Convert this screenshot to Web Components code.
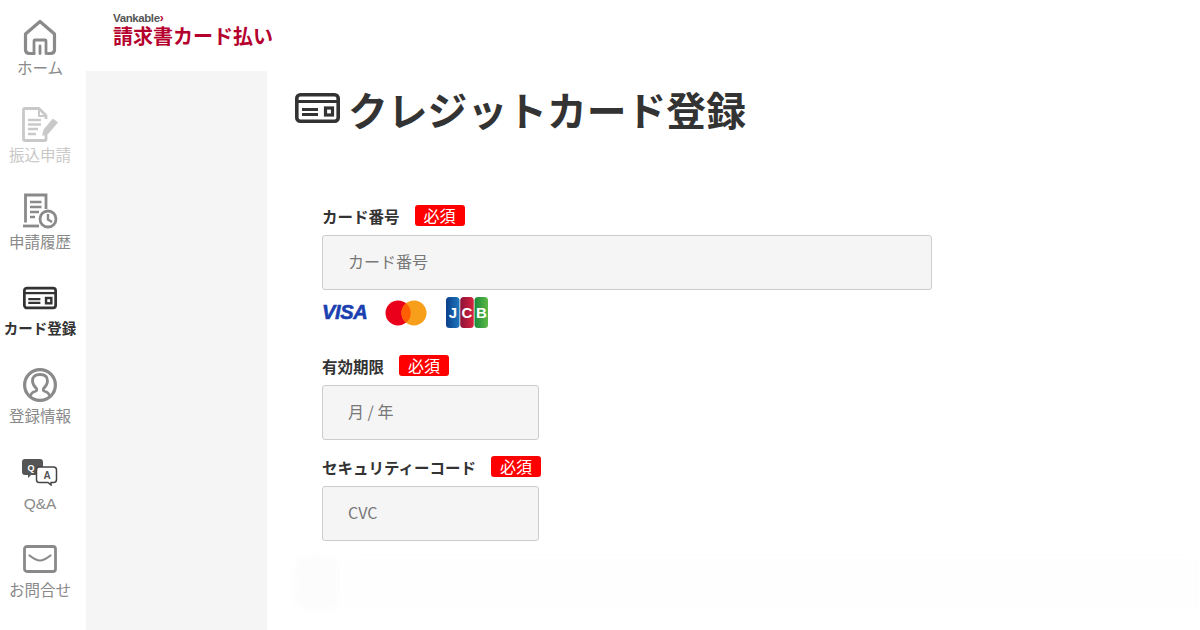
<!DOCTYPE html>
<html lang="ja">
<head>
<meta charset="utf-8">
<title>クレジットカード登録</title>
<style>
    html, body { margin: 0; height: 100%; background: #fff; overflow: hidden; }
    body { font-family: "Noto Sans CJK JP", "Noto Sans", sans-serif; color: #333; }
    svg { display: block; }
</style>
</head>
<body>
<app-shell>
    <side-nav slot="nav">
        <nav-item>
            <svg slot="icon" width="34" height="37" viewBox="0 0 34 37" fill="none" stroke="#8a8a8a" stroke-width="3.200" stroke-linejoin="round" stroke-linecap="round"><path d="M11 34.500H6.500Q2.500 34.500 2.500 30.500V15L17 2.500L31.500 15V30.500Q31.500 34.500 27.500 34.500H25"/><path d="M11 34.500V22Q11 21 12 21H22Q23 21 23 22V34.500M17 34.500V27" stroke-width="2.800"/></svg>
            ホーム
        </nav-item>
        <nav-item dim>
            <svg slot="icon" width="36" height="35" viewBox="0 0 36 35" fill="none" stroke="#c9c9c9" stroke-width="2.800" stroke-linejoin="round"><path d="M24 27V32.500Q24 33.500 23 33.500H3Q1.500 33.500 1.500 32V3Q1.500 1.500 3 1.500H17L24 8.500V12"/><path d="M17 2V9H24" stroke-width="2"/><path d="M6 13H19M6 17.500H19M6 22H16M6 27H14" stroke-width="2.400"/><path d="M21 28L22.500 22.500L31 12.500L35 15.500L26 26Z" fill="#c9c9c9" stroke-width="1.500"/></svg>
            振込申請
        </nav-item>
        <nav-item>
            <svg slot="icon" width="36" height="36" viewBox="0 0 36 36" fill="none" stroke="#8a8a8a" stroke-width="2.800"><path d="M3.500 29.500V2H24V16"/><path d="M1 33H17" stroke-width="2.800"/><path d="M8 9H19.500M8 14H19.500M8 19H17M8 24H13" stroke-width="2.600"/><circle cx="26" cy="26" r="8" stroke-width="2.800"/><path d="M26 21V26.500L30 29" stroke-width="2.400"/></svg>
            申請履歴
        </nav-item>
        <nav-item active>
            <svg slot="icon" width="34" height="24" viewBox="0 0 45 30" fill="none" stroke="#333" stroke-width="3.600"><rect x="1.800" y="1.800" width="41.400" height="26.400" rx="3.500"/><path d="M2 8.500H43" stroke-width="3"/><path d="M7 16.500H23M7 21.500H23" stroke-width="2.800"/><rect x="30.500" y="15" width="7" height="7" stroke-width="3.200"/></svg>
            カード登録
        </nav-item>
        <nav-item>
            <svg slot="icon" width="34" height="34" viewBox="0 0 34 34" fill="none" stroke="#8a8a8a" stroke-width="2.800"><circle cx="17" cy="17" r="15.400" stroke-width="3.200"/><path d="M7 29Q8 24.500 12 23.500Q14.500 22.800 13.500 20.500Q9.500 17 9.500 13Q9.500 6.500 17 6.500Q24.500 6.500 24.500 13Q24.500 17 20.500 20.500Q19.500 22.800 22 23.500Q26 24.500 27 29"/></svg>
            登録情報
        </nav-item>
        <nav-item>
            <svg slot="icon" width="36" height="28" viewBox="0 0 36 28"><path d="M3 1H18Q21 1 21 4V14Q21 17 18 17H9L6 20V17H3Q0 17 0 14V4Q0 1 3 1Z" fill="#555"/><text x="9" y="12.500" font-size="9" font-weight="700" fill="#fff" text-anchor="middle" font-family="Liberation Sans">Q</text><path d="M17 9H31.500Q34.500 9 34.500 12V21.500Q34.500 24.500 31.500 24.500H29V27L26 24.500H17Q14.500 24.500 14.500 21.500V12Q14.500 9 17 9Z" fill="#fff" stroke="#444" stroke-width="1.500"/><text x="25" y="21" font-size="10" font-weight="700" fill="#555" text-anchor="middle" font-family="Liberation Sans">A</text></svg>
            <span class="latin">Q&amp;A</span>
        </nav-item>
        <nav-item>
            <svg slot="icon" width="34" height="28" viewBox="0 0 34 28" fill="none" stroke="#8a8a8a" stroke-width="2.800" stroke-linejoin="round"><rect x="1.500" y="1.500" width="31" height="25" rx="2.500"/><path d="M6.500 10.500Q13 15.500 17 15.500Q21 15.500 27.500 10.500" stroke-width="2.200" stroke-linecap="round"/></svg>
            お問合せ
        </nav-item>
    </side-nav>

    <brand-logo slot="header"></brand-logo>

    <page-title slot="main">
        <svg slot="icon" width="45" height="30" viewBox="0 0 45 30" fill="none" stroke="#333" stroke-width="3.600"><rect x="1.800" y="1.800" width="41.400" height="26.400" rx="3.500"/><path d="M2 8.500H43" stroke-width="3"/><path d="M7 16.500H23M7 21.500H23" stroke-width="2.800"/><rect x="30.500" y="15" width="7" height="7" stroke-width="3.200"/></svg>
        クレジットカード登録
    </page-title>

    <form-field slot="main" label="カード番号" placeholder="カード番号" width="610" style="margin-top:60px">
        <card-logos></card-logos>
    </form-field>
    <form-field slot="main" label="有効期限" placeholder="月 / 年" width="217" style="margin-top:27px"></form-field>
    <form-field slot="main" label="セキュリティーコード" placeholder="CVC" width="217" style="margin-top:16px"></form-field>
    <ghost-row slot="main"></ghost-row>
</app-shell>

<script>
let shell_template = document.createElement("template");
shell_template.innerHTML = `
<style>
    :host {
        display: grid;
        grid-template-columns: 86px 181px 1fr;
        grid-template-rows: 71px 1fr;
        width: 1200px;
        height: 630px;
        overflow: hidden;
    }
    .nav { grid-row: 1 / 3; }
    .header { grid-column: 2 / 4; padding: 12px 0 0 27px; }
    .grey { background-color: #f5f5f5; }
    .main { padding: 0 0 0 28px; }
</style>
<div class="nav"><slot name="nav"></slot></div>
<div class="header"><slot name="header"></slot></div>
<div class="grey"></div>
<div class="main"><slot name="main"></slot></div>
`;

class AppShell extends HTMLElement {
    constructor() {
        super();
        this.attachShadow({mode:"open"});
        this.shadowRoot.appendChild(shell_template.content.cloneNode(true));
    }
}

let nav_template = document.createElement("template");
nav_template.innerHTML = `
<style>
    :host {
        display: flex;
        flex-direction: column;
        width: 80px;
        padding-top: 17px;
    }
</style>
<slot></slot>
`;

class SideNav extends HTMLElement {
    constructor() {
        super();
        this.attachShadow({mode:"open"});
        this.shadowRoot.appendChild(nav_template.content.cloneNode(true));
    }
}

let item_template = document.createElement("template");
item_template.innerHTML = `
<style>
    :host {
        display: flex;
        flex-direction: column;
        align-items: center;
        height: 87px;
        font-size: 15.5px;
        color: #8a8a8a;
        white-space: nowrap;
    }
    :host([dim]) { color: #c9c9c9; }
    :host([active]) { color: #333; font-weight: 700; font-size: 14.5px; }
    .icon {
        height: 40px;
        display: flex;
        align-items: center;
        justify-content: center;
    }
    .label { height: 22px; line-height: 20px; }
    ::slotted(.latin) { font-family: "Liberation Sans", sans-serif; }
</style>
<div class="icon"><slot name="icon"></slot></div>
<div class="label"><slot></slot></div>
`;

class NavItem extends HTMLElement {
    constructor() {
        super();
        this.attachShadow({mode:"open"});
        this.shadowRoot.appendChild(item_template.content.cloneNode(true));
    }
}

let logo_template = document.createElement("template");
logo_template.innerHTML = `
<style>
    :host { display: block; }
    .top {
        font-family: "Liberation Sans", sans-serif;
        font-size: 11.5px;
        font-weight: 700;
        line-height: 13px;
        letter-spacing: -0.4px;
        color: #555;
        display: flex;
        align-items: center;
    }
    .top i { color: #b5002e; font-style: normal; font-weight: 700; font-size: 12px; }
    .name {
        font-size: 20px;
        font-weight: 700;
        line-height: 22px;
        color: #b5002e;
        white-space: nowrap;
    }
</style>
<div class="top">Vankable<i>›</i></div>
<div class="name">請求書カード払い</div>
`;

class BrandLogo extends HTMLElement {
    constructor() {
        super();
        this.attachShadow({mode:"open"});
        this.shadowRoot.appendChild(logo_template.content.cloneNode(true));
    }
}

let title_template = document.createElement("template");
title_template.innerHTML = `
<style>
    :host {
        display: flex;
        align-items: center;
        gap: 8px;
        height: 74px;
        font-size: 39.8px;
        font-weight: 700;
        color: #333;
        white-space: nowrap;
    }
</style>
<slot name="icon"></slot>
<slot></slot>
`;

class PageTitle extends HTMLElement {
    constructor() {
        super();
        this.attachShadow({mode:"open"});
        this.shadowRoot.appendChild(title_template.content.cloneNode(true));
    }
}

let field_template = document.createElement("template");
field_template.innerHTML = `
<style>
    :host {
        display: block;
        margin-left: 27px;
    }
    .head {
        display: flex;
        align-items: center;
        gap: 15px;
        height: 21px;
        margin-bottom: 9px;
        font-size: 15.5px;
        font-weight: 700;
        color: #333;
    }
    .badge {
        width: 50px;
        height: 21px;
        line-height: 21px;
        text-align: center;
        background-color: #f00;
        border-radius: 3px;
        color: #fff;
        font-size: 16px;
        font-weight: 400;
    }
    .box {
        box-sizing: border-box;
        height: 55px;
        padding: 0 0 3px 25px;
        display: flex;
        align-items: center;
        background-color: #f5f5f5;
        border: 1px solid #ccc;
        border-radius: 3px;
        font-size: 16px;
        color: #777;
    }
</style>
<div class="head"><span id="label"></span><span class="badge">必須</span></div>
<div class="box" id="box"></div>
<slot></slot>
`;

class FormField extends HTMLElement {
    constructor() {
        super();
        this.attachShadow({mode:"open"});
        this.shadowRoot.appendChild(field_template.content.cloneNode(true));
    }

    connectedCallback() {
        this.shadowRoot.querySelector("#label").innerText = this.getAttribute("label");
        let box = this.shadowRoot.querySelector("#box");
        box.innerText = this.getAttribute("placeholder");
        box.style.width = this.getAttribute("width") + "px";
    }
}

let logos_template = document.createElement("template");
logos_template.innerHTML = `
<style>
    :host {
        display: flex;
        align-items: center;
        gap: 17px;
        height: 31px;
        margin-top: 7px;
    }
    .visa {
        font-family: "Liberation Sans", sans-serif;
        font-size: 20px;
        font-style: italic;
        font-weight: 700;
        letter-spacing: -0.3px;
        color: #1a3fb0;
        -webkit-text-stroke: 0.6px #1a3fb0;
        width: 46px;
    }
    svg { display: block; }
    .jcb { margin-left: 2px; }
</style>
<span class="visa">VISA</span>
<svg width="42" height="26" viewBox="0 0 42 26">
    <circle cx="13" cy="13" r="12.500" fill="#eb001b"/>
    <circle cx="29" cy="13" r="12.500" fill="#f79e1b"/>
    <path d="M21 3.200A12.500 12.500 0 0 1 21 22.800A12.500 12.500 0 0 1 21 3.200Z" fill="#ff5f00"/>
</svg>
<svg class="jcb" width="42" height="31" viewBox="0 0 42 31">
    <defs>
        <linearGradient id="jb" x1="0" x2="1" y1="0" y2="0"><stop offset="0" stop-color="#0b3f8c"/><stop offset="1" stop-color="#1e76bd"/></linearGradient>
        <linearGradient id="cr" x1="0" x2="1" y1="0" y2="0"><stop offset="0" stop-color="#8b1438"/><stop offset="1" stop-color="#d8203f"/></linearGradient>
        <linearGradient id="bg" x1="0" x2="1" y1="0" y2="0"><stop offset="0" stop-color="#1a8a3a"/><stop offset="1" stop-color="#5db947"/></linearGradient>
    </defs>
    <rect x="0" y="0" width="13.500" height="31" rx="3.500" fill="url(#jb)"/>
    <rect x="14.250" y="0" width="13.500" height="31" rx="3.500" fill="url(#cr)"/>
    <rect x="28.500" y="0" width="13.500" height="31" rx="3.500" fill="url(#bg)"/>
    <g font-family="Liberation Sans" font-size="15" font-weight="700" fill="#fff" text-anchor="middle">
        <text x="7" y="21">J</text>
        <text x="21" y="21">C</text>
        <text x="35.500" y="21">B</text>
    </g>
</svg>
`;

class CardLogos extends HTMLElement {
    constructor() {
        super();
        this.attachShadow({mode:"open"});
        this.shadowRoot.appendChild(logos_template.content.cloneNode(true));
    }
}

let ghost_template = document.createElement("template");
ghost_template.innerHTML = `
<style>
    :host {
        display: flex;
        height: 54px;
        margin-top: 15px;
    }
    .a { width: 45px; background-color: #fcfcfc; border-radius: 14px; filter: blur(3px); }
    .b { flex: 1; background-color: #fefefe; filter: blur(6px); }
</style>
<div class="a"></div>
<div class="b"></div>
`;

class GhostRow extends HTMLElement {
    constructor() {
        super();
        this.attachShadow({mode:"open"});
        this.shadowRoot.appendChild(ghost_template.content.cloneNode(true));
    }
}

customElements.define("app-shell", AppShell);
customElements.define("side-nav", SideNav);
customElements.define("nav-item", NavItem);
customElements.define("brand-logo", BrandLogo);
customElements.define("page-title", PageTitle);
customElements.define("form-field", FormField);
customElements.define("card-logos", CardLogos);
customElements.define("ghost-row", GhostRow);
</script>
</body>
</html>
